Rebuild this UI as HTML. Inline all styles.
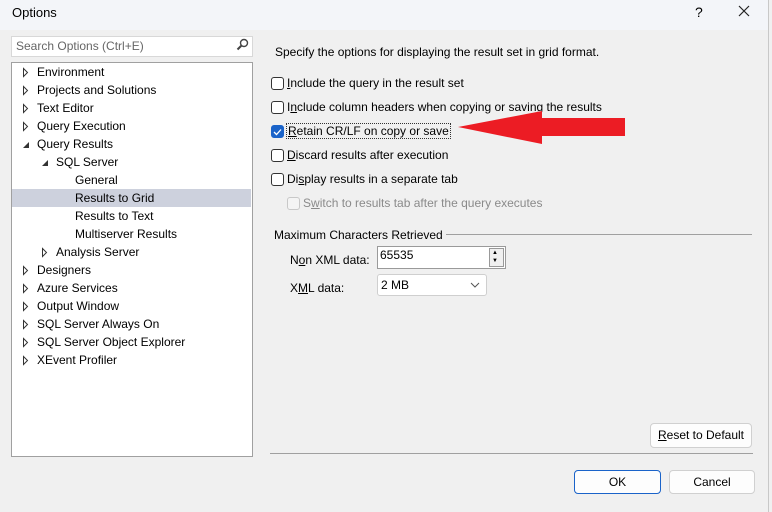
<html><head><style>
body{margin:0;width:772px;height:512px;background:#f0f0f0;font-family:"Liberation Sans",sans-serif;font-size:12px;color:#000;position:relative;overflow:hidden}
.a{position:absolute;white-space:nowrap}
.cb{position:absolute;width:11px;height:11px;border:1px solid #333;border-radius:3px;background:#fff}
u{text-decoration:underline}
.t{position:absolute;height:18px;line-height:18px;white-space:nowrap}
.tri{position:absolute;font-size:8px}
.btn{position:absolute;background:#fdfdfd;border:1px solid #d0d0d0;border-radius:4px;text-align:center}
</style></head><body>
<div class="a" style="left:0;top:0;width:768px;height:30px;background:#f3f5f9"></div>
<div class="a" style="left:768px;top:0;width:1px;height:512px;background:#c8c8c8"></div>
<div class="a" style="left:12px;top:5px;font-size:13px">Options</div>
<div class="a" style="left:695px;top:4px;font-size:14px">?</div>
<svg class="a" style="left:738px;top:5px" width="12" height="12"><path d="M1 1L11 11M11 1L1 11" stroke="#222" stroke-width="1.2"/></svg>
<div class="a" style="left:11px;top:36px;width:240px;height:19px;background:#fff;border:1px solid #d8d8d8"></div>
<div class="a" style="left:16px;top:39px;color:#666">Search Options (Ctrl+E)</div>
<svg class="a" style="left:236px;top:38px" width="14" height="14"><circle cx="8" cy="5" r="3.5" fill="none" stroke="#444" stroke-width="1.4"/><path d="M5.5 7.5L1.5 11.5" stroke="#444" stroke-width="2"/></svg>
<div class="a" style="left:11px;top:62px;width:240px;height:393px;background:#fff;border:1px solid #a0a0a0"></div>
<div class="a" style="left:12px;top:189px;width:239px;height:18px;background:#cdd1dd"></div>
<div class="t" style="left:37px;top:63px">Environment</div>
<div class="t" style="left:37px;top:81px">Projects and Solutions</div>
<div class="t" style="left:37px;top:99px">Text Editor</div>
<div class="t" style="left:37px;top:117px">Query Execution</div>
<div class="t" style="left:37px;top:135px">Query Results</div>
<div class="t" style="left:56px;top:153px">SQL Server</div>
<div class="t" style="left:75px;top:171px">General</div>
<div class="t" style="left:75px;top:189px">Results to Grid</div>
<div class="t" style="left:75px;top:207px">Results to Text</div>
<div class="t" style="left:75px;top:225px">Multiserver Results</div>
<div class="t" style="left:56px;top:243px">Analysis Server</div>
<div class="t" style="left:37px;top:261px">Designers</div>
<div class="t" style="left:37px;top:279px">Azure Services</div>
<div class="t" style="left:37px;top:297px">Output Window</div>
<div class="t" style="left:37px;top:315px">SQL Server Always On</div>
<div class="t" style="left:37px;top:333px">SQL Server Object Explorer</div>
<div class="t" style="left:37px;top:351px">XEvent Profiler</div>
<svg class="a" style="left:20px;top:63px" width="40" height="310" fill="none" stroke="#333">
<g><path d="M3.5 5.5v8l4-4z"/><path transform="translate(0,18)" d="M3.5 5.5v8l4-4z"/><path transform="translate(0,36)" d="M3.5 5.5v8l4-4z"/><path transform="translate(0,54)" d="M3.5 5.5v8l4-4z"/>
<path transform="translate(19,180)" d="M3.5 5.5v8l4-4z"/>
<path transform="translate(0,198)" d="M3.5 5.5v8l4-4z"/><path transform="translate(0,216)" d="M3.5 5.5v8l4-4z"/><path transform="translate(0,234)" d="M3.5 5.5v8l4-4z"/><path transform="translate(0,252)" d="M3.5 5.5v8l4-4z"/><path transform="translate(0,270)" d="M3.5 5.5v8l4-4z"/><path transform="translate(0,288)" d="M3.5 5.5v8l4-4z"/></g>
<path d="M9 79v6h-6z" fill="#333" stroke="none"/><path d="M28 97v6h-6z" fill="#333" stroke="none"/>
</svg>
<div class="a" style="left:275px;top:45px">Specify the options for displaying the result set in grid format.</div>
<div class="cb" style="left:271px;top:77px"></div><div class="a" style="left:287px;top:76px"><u>I</u>nclude the query in the result set</div>
<div class="cb" style="left:271px;top:101px"></div><div class="a" style="left:287px;top:100px">I<u>n</u>clude column headers when copying or saving the results</div>
<div class="cb" style="left:271px;top:125px;background:#1a63c9;border-color:#1a63c9"></div><svg class="a" style="left:273px;top:128px" width="9" height="8"><path d="M1 4l2.5 2.5L8 1.5" stroke="#fff" fill="none" stroke-width="1.3"/></svg>
<div class="a" style="left:286px;top:123px;border:1px dotted #333;padding:0 1px"><u>R</u>etain CR/LF on copy or save</div>
<div class="cb" style="left:271px;top:149px"></div><div class="a" style="left:287px;top:148px"><u>D</u>iscard results after execution</div>
<div class="cb" style="left:271px;top:173px"></div><div class="a" style="left:287px;top:172px">Di<u>s</u>play results in a separate tab</div>
<div class="cb" style="left:287px;top:197px;border-color:#c8c8c8;background:#f4f4f4"></div><div class="a" style="left:303px;top:196px;color:#8a8a8a">S<u>w</u>itch to results tab after the query executes</div>
<svg class="a" style="left:455px;top:110px" width="172" height="36"><path d="M3 17L87 1V8H170V26H87V34Z" fill="#ec1c24"/></svg>
<div class="a" style="left:274px;top:228px">Maximum Characters Retrieved</div>
<div class="a" style="left:446px;top:234px;width:306px;height:1px;background:#a0a0a0"></div>
<div class="a" style="left:290px;top:253px">N<u>o</u>n XML data:</div>
<div class="a" style="left:377px;top:246px;width:127px;height:21px;background:#fff;border:1px solid #9a9a9a"></div>
<div class="a" style="left:380px;top:248px">65535</div>
<div class="a" style="left:489px;top:248px;width:13px;height:17px;border:1px solid #999;background:#f0f0f0"></div>
<div class="a" style="left:492px;top:249px;font-size:6px;line-height:8px">▲<br>▼</div>
<div class="a" style="left:290px;top:281px">X<u>M</u>L data:</div>
<div class="a" style="left:377px;top:274px;width:108px;height:20px;background:#fff;border:1px solid #cfcfcf;border-radius:3px"></div>
<div class="a" style="left:381px;top:278px">2 MB</div>
<svg class="a" style="left:470px;top:282px" width="10" height="6"><path d="M1 1l4 4 4-4" stroke="#555" fill="none"/></svg>
<div class="btn" style="left:650px;top:423px;width:100px;height:23px;line-height:23px"><u>R</u>eset to Default</div>
<div class="a" style="left:270px;top:453px;width:483px;height:1px;background:#a0a0a0"></div>
<div class="btn" style="left:574px;top:470px;width:85px;height:22px;line-height:22px;border-color:#1a63c9">OK</div>
<div class="btn" style="left:669px;top:470px;width:84px;height:22px;line-height:22px">Cancel</div>
</body></html>
